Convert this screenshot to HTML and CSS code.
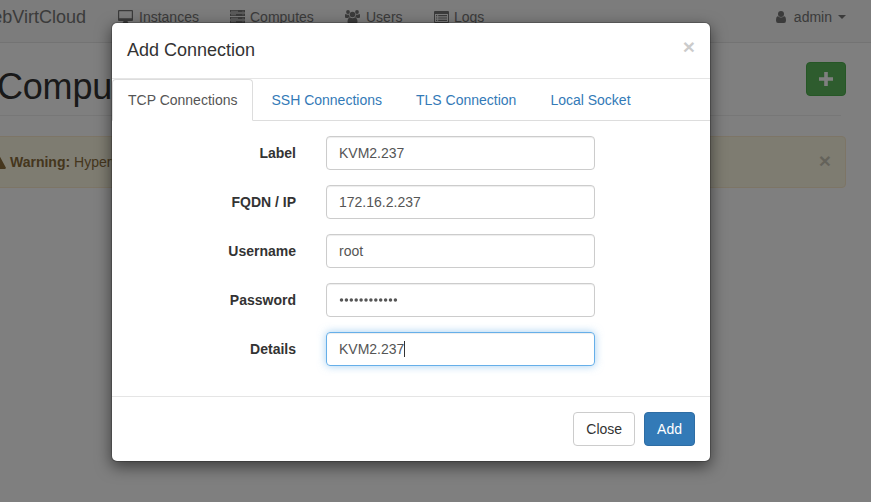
FILE: index.html
```html
<!DOCTYPE html>
<html lang="en">
<head>
<meta charset="utf-8">
<title>WebVirtCloud</title>
<link rel="stylesheet" href="styles.css">
</head>
<body>
<div class="page">
  <nav class="navbar">
    <div class="brand">WebVirtCloud</div>
    <div class="nav-item instances"><svg width="15" height="14" viewBox="0 0 15 14"><path fill-rule="evenodd" d="M1 0h13q1 0 1 1v9q0 1-1 1H9.500q0 1 1 2v1h-6v-1q1-1 1-2H1q-1 0-1-1V1q0-1 1-1zM1.200 1.200v7h12.600v-7z"/></svg>Instances</div>
    <div class="nav-item computes"><svg width="15" height="14" viewBox="0 0 15 14"><path d="M0 0h15v2.500H0zM0 3.500h15V6H0zM0 7h15v2.500H0zM0 10.500h15V13H0z"/><path class="cut" d="M1 1.250h7M1 4.750h5M1 8.250h7M1 11.750h5M12.500 1.250h1M12.500 4.750h1M12.500 8.250h1M12.500 11.750h1"/></svg>Computes</div>
    <div class="nav-item users"><svg width="15" height="14" viewBox="0 0 15 14"><circle cx="3" cy="2" r="1.900"/><circle cx="12" cy="2" r="1.900"/><circle cx="7.500" cy="4.500" r="2.800"/><path d="M0 7V5.300q0-1.500 1-1.100 1.500.8 3 .2 0 1.800 1 2.800-1.500.1-2.300.8H1Q0 8 0 7zM15 7V5.300q0-1.500-1-1.100-1.500.8-3 .2 0 1.800-1 2.800 1.500.1 2.300.8H14q1 0 1-1zM2.500 12q0-4.500 2.700-4.500 2.300 1.500 4.600 0 2.700 0 2.700 4.500 0 2-2 2h-6q-2 0-2-2z"/></svg>Users</div>
    <div class="nav-item logs"><svg width="15" height="14" viewBox="0 0 15 14"><path fill-rule="evenodd" d="M1 1h13q1 0 1 1v10q0 1-1 1H1q-1 0-1-1V2q0-1 1-1zM1 4v7.500q0 .5.500.500h12q.5 0 .5-.5V4z"/><path d="M2 5h1.200v1.200H2zM4.200 5H13v1.200H4.200zM2 7.400h1.200v1.200H2zM4.200 7.400H13v1.200H4.200zM2 9.800h1.200V11H2zM4.200 9.800H13V11H4.200z"/></svg>Logs</div>
    <div class="account"><svg width="10" height="12" viewBox="0 0 10 12"><circle cx="5" cy="3" r="3"/><path d="M2 5.200q3 2.500 6 0 2 0 2 4.300 0 2.500-2 2.500H2q-2 0-2-2.500 0-4.300 2-4.300z"/></svg>admin<span class="caret"></span></div>
  </nav>
  <header class="page-header">
    <h1>Computes</h1>
    <button class="btn btn-success"><svg width="14" height="14" viewBox="0 0 14 14"><path d="M5.200 0h3.600v5.200H14v3.600H8.800V14H5.200V8.800H0V5.200h5.200z"/></svg></button>
  </header>
  <div class="alert">
    <svg width="14" height="13" viewBox="0 0 14 13"><path fill-rule="evenodd" d="M6.200.5q.8-1 1.600 0l6 11q.4 1.300-.8 1.500H1Q-.2 12.800.2 11.500zM6 4l.3 4.500h1.400L8 4zM6.100 9.500v1.800h1.800V9.500z"/></svg>
    <span class="message"><b>Warning:</b> Hypervisor</span>
    <span class="close">×</span>
  </div>
</div>
<div class="backdrop">
  <section class="modal">
    <header class="modal-header"><h4>Add Connection</h4><span class="close">×</span></header>
    <nav class="tabs">
      <a class="active">TCP Connections</a><a>SSH Connections</a><a>TLS Connection</a><a>Local Socket</a>
    </nav>
    <form class="form">
      <div class="row"><label>Label</label><div class="control">KVM2.237</div></div>
      <div class="row"><label>FQDN / IP</label><div class="control">172.16.2.237</div></div>
      <div class="row"><label>Username</label><div class="control">root</div></div>
      <div class="row"><label>Password</label><div class="control"><svg width="60" height="6" viewBox="0 0 60 6"><path class="dots" d="M2.500 3h55"/></svg></div></div>
      <div class="row"><label>Details</label><div class="control focus">KVM2.237<span class="cursor"></span></div></div>
    </form>
    <footer class="modal-footer"><button class="btn btn-default">Close</button><button class="btn btn-primary">Add</button></footer>
  </section>
</div>
</body>
</html>
```
FILE: styles.css
```css
* { box-sizing: border-box; }
html, body { height: 100%; }
body {
  margin: 0;
  overflow: hidden;
  position: relative;
  background: #fff;
  color: #333;
  font: 14px/20px "Liberation Sans", Arial, sans-serif;
}
svg { flex: none; fill: currentColor; }
.page { height: 502px; overflow: hidden; }
.navbar {
  display: flex;
  align-items: center;
  height: 43px;
  padding: 0 25px 8px 0;
  background: #f8f8f8;
  border-bottom: 1px solid #e7e7e7;
  color: #777;
}
.brand {
  display: flex;
  justify-content: flex-end;
  width: 86px;
  margin-right: 32px;
  font-size: 18px;
}
.nav-item { display: flex; align-items: center; gap: 5px; }
.nav-item svg { margin-top: -1px; }
.instances { width: 112px; }
.computes { width: 115px; }
.users { width: 89px; }
.instances, .users { gap: 6px; }
.cut { stroke: #f8f8f8; stroke-width: .6; }
.account { display: flex; align-items: center; margin-left: auto; }
.account svg { margin-right: 8px; }
.caret {
  margin-left: 6px;
  border: 4px solid transparent;
  border-top-color: currentColor;
  border-bottom: 0;
}
.page-header {
  display: flex;
  justify-content: space-between;
  align-items: flex-start;
  height: 73px;
  margin-right: 30px;
  padding-top: 19px;
  border-bottom: 1px solid #eee;
}
h1 {
  margin: 5px 0 0 -3px;
  font-size: 36px;
  font-weight: 500;
  line-height: 40px;
  letter-spacing: -.2px;
}
.page-header .btn { margin-right: -5px; }
.btn {
  height: 34px;
  padding: 6px 12px;
  border: 1px solid;
  border-radius: 4px;
  font: inherit;
}
.btn-success { background: #5cb85c; border-color: #4cae4c; color: #fff; }
.btn-success svg { display: block; }
.alert {
  display: flex;
  align-items: center;
  height: 52px;
  margin: 20px 25px 0 -22px;
  padding: 0 14px 0 13px;
  background: #fcf8e3;
  border: 1px solid #faebcc;
  border-radius: 4px;
  color: #8a6d3b;
}
.message { margin-left: 4px; }
.close {
  margin-left: auto;
  color: #000;
  font-size: 21px;
  font-weight: 700;
  line-height: 21px;
  opacity: .2;
  text-shadow: 0 1px 0 #fff;
}
.alert .close { margin-top: -4px; }
.backdrop {
  position: absolute;
  inset: 0;
  padding: 22px 160px 0 111px;
  background: rgba(0, 0, 0, .5);
}
.modal {
  width: 600px;
  height: 440px;
  background: #fff;
  background-clip: padding-box;
  border: 1px solid rgba(0, 0, 0, .2);
  border-radius: 6px;
  box-shadow: 0 5px 15px rgba(0, 0, 0, .5);
}
.modal-header {
  display: flex;
  align-items: flex-start;
  height: 56px;
  padding: 15px 15px 0;
  border-bottom: 1px solid #e5e5e5;
}
h4 { margin: 0; font-size: 18px; font-weight: 500; line-height: 25px; }
.modal-header .close { margin-top: -2px; }
.tabs {
  display: flex;
  height: 42px;
  border-bottom: 1px solid #ddd;
}
.tabs a {
  height: 42px;
  margin-right: 2px;
  padding: 10px 15px;
  border: 1px solid transparent;
  border-radius: 4px 4px 0 0;
  color: #337ab7;
}
.tabs .active {
  background: #fff;
  border-color: #ddd #ddd #fff;
  color: #555;
}
.form { height: 275px; padding-top: 15px; }
.row { display: flex; margin-bottom: 15px; }
.row label {
  width: 184px;
  margin-right: 30px;
  padding-top: 7px;
  text-align: right;
  font-weight: 700;
}
.control {
  display: flex;
  align-items: center;
  width: 269px;
  height: 34px;
  padding: 6px 12px;
  border: 1px solid #ccc;
  border-radius: 4px;
  box-shadow: inset 0 1px 1px rgba(0, 0, 0, .075);
  color: #555;
}
.focus {
  border-color: #66afe9;
  box-shadow: inset 0 1px 1px rgba(0, 0, 0, .075), 0 0 8px rgba(102, 175, 233, .6);
}
.cursor { width: 1px; height: 16px; background: #333; }
.dots { stroke: #555; stroke-width: 3.500; stroke-linecap: round; stroke-dasharray: 0 4.900; }
.modal-footer {
  display: flex;
  justify-content: flex-end;
  gap: 9px;
  padding: 15px;
  border-top: 1px solid #e5e5e5;
}
.btn-default { background: #fff; border-color: #ccc; color: #333; }
.btn-primary { background: #337ab7; border-color: #2e6da4; color: #fff; }
```
